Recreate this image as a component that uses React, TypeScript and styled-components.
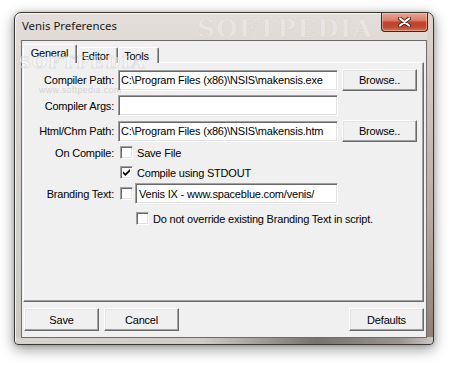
import React from 'react';
import styled, { createGlobalStyle } from 'styled-components';

const Global = createGlobalStyle`
  html, body { margin: 0; padding: 0; background: #ffffff; }
  body { font-family: "Liberation Sans", Arial, sans-serif; font-size: 11px; color: #000; }
  * { box-sizing: border-box; }
`;

const Page = styled.div`
  width: 454px;
  height: 366px;
  padding: 12px 0 0 14px;
  overflow: hidden;
`;

const Window = styled.div`
  position: relative;
  width: 420px;
  height: 333px;
  border: 1px solid #3a3835;
  border-radius: 7px 7px 4px 4px;
  padding: 0 6px 6px 6px;
  display: flex;
  flex-direction: column;
  background:
    linear-gradient(to right, #d6d2ce 0%, #cfcac6 45%, #77726d 72%, #9b948e 92%, #cdc7c1 100%) bottom / 100% 7px no-repeat,
    linear-gradient(to bottom, #ddd7d1 0%, #b9aca2 60%, #8f7e72 100%) right / 6px 100% no-repeat,
    linear-gradient(to bottom, #e3ded9 0%, #d8d2cc 30%, #cfd1c9 70%, #cbc6c1 100%);
  box-shadow: 0 4px 14px rgba(0, 0, 0, 0.42), 0 0 4px rgba(0, 0, 0, 0.18),
    inset 1px 1px 0 rgba(255, 255, 255, 0.75);
  overflow: hidden;
`;

const TitleBar = styled.div`
  height: 27px;
  flex: none;
  display: flex;
  align-items: flex-start;
  justify-content: space-between;
`;

const Title = styled.div`
  font-family: "Noto Sans", "Open Sans", sans-serif;
  font-size: 11.4px;
  color: #1a1a1a;
  padding: 5px 0 0 1px;
`;

const CloseButton = styled.div`
  width: 47px;
  height: 19px;
  margin-right: -1px;
  border: 1px solid #4a2018;
  border-top: none;
  border-radius: 0 0 4px 4px;
  background: linear-gradient(to bottom, #e6a594 0%, #d98069 40%, #c2432b 52%, #c2462d 75%, #cf7157 100%);
  box-shadow: inset 0 0 0 1px rgba(255, 210, 195, 0.5);
  display: flex;
  align-items: center;
  justify-content: center;
  position: relative;
  z-index: 4;
`;

const Watermark = styled.span<{ $x: number; $y: number; $size: number; $spacing: number; $fill: string; $edge: string }>`
  position: absolute;
  left: ${(p) => p.$x}px;
  top: ${(p) => p.$y}px;
  font-family: "DejaVu Serif", "Liberation Serif", serif;
  font-weight: bold;
  font-size: ${(p) => p.$size}px;
  letter-spacing: ${(p) => p.$spacing}px;
  line-height: 1;
  color: ${(p) => p.$fill};
  -webkit-text-stroke: 0.6px ${(p) => p.$edge};
  pointer-events: none;
  white-space: nowrap;
  z-index: 3;
`;

const SmallMark = styled.span`
  position: absolute;
  left: 24px;
  top: 72px;
  font-family: "Liberation Sans", Arial, sans-serif;
  font-size: 9px;
  letter-spacing: 0.3px;
  color: rgba(150, 150, 150, 0.35);
  pointer-events: none;
  z-index: 3;
`;

const Client = styled.div`
  flex: 1;
  display: flex;
  flex-direction: column;
  background: #f0f0f0;
  border: 1px solid #6f6b68;
  padding: 4px 2px 5px 1px;
`;

const TabRow = styled.div`
  height: 18px;
  display: flex;
  align-items: flex-end;
  position: relative;
  z-index: 1;
  margin-bottom: -1px;
`;

const Tab = styled.div<{ $active?: boolean; $width: number }>`
  width: ${(p) => p.$width}px;
  height: ${(p) => (p.$active ? 19 : 16)}px;
  background: #f0f0f0;
  border-top: 1px solid #ffffff;
  border-left: 1px solid #ffffff;
  border-right: 1px solid #696969;
  border-radius: 2px 2px 0 0;
  box-shadow: inset -1px 0 0 #a0a0a0;
  display: flex;
  align-items: center;
  justify-content: center;
  padding: ${(p) => (p.$active ? '0 1px 2px 0' : '0 4px 0 0')};
  letter-spacing: -0.2px;
  white-space: nowrap;
`;

const Panel = styled.div`
  width: 401px;
  height: 240px;
  background: #f0f0f0;
  border-top: 1px solid #ffffff;
  border-left: 1px solid #ffffff;
  border-right: 1px solid #696969;
  border-bottom: 1px solid #696969;
  box-shadow: inset -1px -1px 0 #a0a0a0;
  display: flex;
  flex-direction: column;
  padding-top: 6px;
`;

const Row = styled.div<{ $mt: number; $h: number }>`
  display: grid;
  grid-template-columns: 90px 1fr;
  column-gap: 4px;
  align-items: center;
  height: ${(p) => p.$h}px;
  margin-top: ${(p) => p.$mt}px;
`;

const Label = styled.div`
  text-align: right;
  letter-spacing: -0.2px;
  white-space: nowrap;
`;

const Field = styled.div<{ $indent?: number }>`
  display: flex;
  align-items: center;
  padding-left: ${(p) => p.$indent ?? 0}px;
`;

const TextBox = styled.input<{ $width: number; $pad: number; $ml?: number }>`
  width: ${(p) => p.$width}px;
  height: 21px;
  margin: 0 0 0 ${(p) => p.$ml ?? 0}px;
  padding: 0 0 0 ${(p) => p.$pad}px;
  border: 1px solid;
  border-color: #a0a0a0 #ffffff #ffffff #a0a0a0;
  box-shadow: inset 1px 1px 0 #696969, inset -1px -1px 0 #e3e3e3;
  background: #ffffff;
  font-family: "Liberation Sans", Arial, sans-serif;
  font-size: 11px;
  letter-spacing: -0.2px;
  color: #000;
  outline: none;
`;

const Button = styled.button<{ $h?: number }>`
  width: 75px;
  height: ${(p) => p.$h ?? 22}px;
  margin: 0;
  padding: 0;
  background: #f0f0f0;
  border: 1px solid;
  border-color: #ffffff #696969 #696969 #ffffff;
  box-shadow: inset -1px -1px 0 #a0a0a0, inset 1px 1px 0 #e3e3e3;
  font-family: "Liberation Sans", Arial, sans-serif;
  font-size: 11px;
  letter-spacing: -0.2px;
  color: #000;
  display: flex;
  align-items: center;
  justify-content: center;
`;

const BrowseButton = styled(Button)`
  margin-left: 4px;
`;

const CheckBox = styled.span<{ $ml: number }>`
  width: 13px;
  height: 13px;
  flex: none;
  margin-left: ${(p) => p.$ml}px;
  border: 1px solid;
  border-color: #a0a0a0 #ffffff #ffffff #a0a0a0;
  box-shadow: inset 1px 1px 0 #696969, inset -1px -1px 0 #e3e3e3;
  background: #ffffff;
  display: flex;
  align-items: center;
  justify-content: center;
`;

const CheckText = styled.span`
  margin-left: 4px;
  letter-spacing: -0.2px;
  white-space: nowrap;
`;

const ButtonRow = styled.div`
  display: flex;
  align-items: center;
  margin-top: 6px;
  padding-left: 1px;
  gap: 5px;
`;

const Spacer = styled.div`
  flex: 1;
`;

const Check = () => (
  <svg width="7" height="7" viewBox="0 0 7 7">
    <path d="M0 2.2 L2.4 4.6 L7 0 L7 2.4 L2.4 7 L0 4.6 Z" fill="#000" />
  </svg>
);

const CloseGlyph = () => (
  <svg width="13" height="10" viewBox="0 0 13 10">
    <path d="M2 1.5 L11 8.5 M11 1.5 L2 8.5" stroke="#4a2a24" strokeWidth="4" strokeLinecap="round" />
    <path d="M2 1.5 L11 8.5 M11 1.5 L2 8.5" stroke="#ffffff" strokeWidth="2.2" strokeLinecap="round" />
  </svg>
);

export default function App() {
  return (
    <Page>
      <Global />
      <Window>
        <Watermark $x={182} $y={3} $size={25} $spacing={1} $fill="rgba(255,255,255,0.26)" $edge="rgba(120,110,100,0.13)">
          SOFTPEDIA
        </Watermark>
        <Watermark $x={3} $y={41} $size={17} $spacing={1.6} $fill="rgba(255,255,255,0.55)" $edge="rgba(150,150,150,0.35)">
          SOFTPEDIA
        </Watermark>
        <SmallMark>www.softpedia.com</SmallMark>
        <TitleBar>
          <Title>Venis Preferences</Title>
          <CloseButton>
            <CloseGlyph />
          </CloseButton>
        </TitleBar>
        <Client>
          <TabRow>
            <Tab $active $width={54}>General</Tab>
            <Tab $width={41}>Editor</Tab>
            <Tab $width={41}>Tools</Tab>
          </TabRow>
          <Panel>
            <Row $mt={0} $h={22}>
              <Label>Compiler Path:</Label>
              <Field>
                <TextBox $width={220} $pad={2} readOnly defaultValue="C:\Program Files (x86)\NSIS\makensis.exe" />
                <BrowseButton>Browse..</BrowseButton>
              </Field>
            </Row>
            <Row $mt={4} $h={21}>
              <Label>Compiler Args:</Label>
              <Field>
                <TextBox $width={220} $pad={2} readOnly defaultValue="" />
              </Field>
            </Row>
            <Row $mt={4} $h={22}>
              <Label>Html/Chm Path:</Label>
              <Field>
                <TextBox $width={220} $pad={2} readOnly defaultValue="C:\Program Files (x86)\NSIS\makensis.htm" />
                <BrowseButton>Browse..</BrowseButton>
              </Field>
            </Row>
            <Row $mt={4} $h={13}>
              <Label>On Compile:</Label>
              <Field>
                <CheckBox $ml={2} />
                <CheckText>Save File</CheckText>
              </Field>
            </Row>
            <Row $mt={7} $h={13}>
              <span />
              <Field>
                <CheckBox $ml={2}>
                  <Check />
                </CheckBox>
                <CheckText>Compile using STDOUT</CheckText>
              </Field>
            </Row>
            <Row $mt={4} $h={21}>
              <Label>Branding Text:</Label>
              <Field>
                <CheckBox $ml={2} />
                <TextBox $width={203} $pad={3} $ml={2} readOnly defaultValue="Venis IX - www.spaceblue.com/venis/" />
              </Field>
            </Row>
            <Row $mt={8} $h={13}>
              <span />
              <Field $indent={18}>
                <CheckBox $ml={0} />
                <CheckText>Do not override existing Branding Text in script.</CheckText>
              </Field>
            </Row>
          </Panel>
          <ButtonRow>
            <Button $h={23}>Save</Button>
            <Button $h={23}>Cancel</Button>
            <Spacer />
            <Button $h={23}>Defaults</Button>
          </ButtonRow>
        </Client>
      </Window>
    </Page>
  );
}
